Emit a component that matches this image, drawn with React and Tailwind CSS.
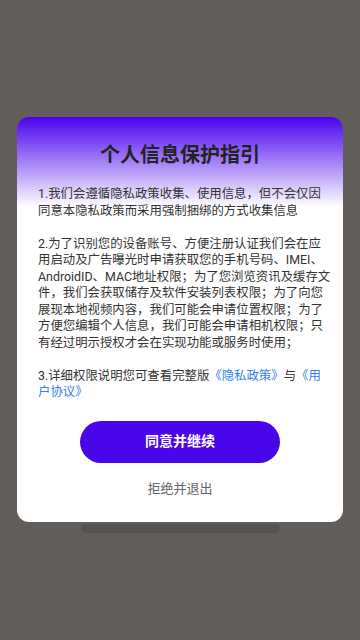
import React from 'react';

const font = { fontFamily: '"Roboto", "Noto Sans CJK SC", sans-serif' };

export default function App() {
    return (
        <div className="min-h-[640px] w-full bg-[#625e5b] pt-[117px]" style={font}>
            {/* Dialog card */}
            <div className="mx-[17px] rounded-[12px] bg-[linear-gradient(to_bottom,#4a02ee_0px,#ffffff_90px)] px-[21px] pt-[24px] pb-[23px]">
                <h1 className="text-center text-[20px] leading-[28px] font-bold text-[#222222]">个人信息保护指引</h1>

                <div className="mt-[17px] text-[12.4px] leading-[16.5px] text-[#333333] whitespace-nowrap">
                    <div>1.我们会遵循隐私政策收集、使用信息，但不会仅因</div>
                    <div>同意本隐私政策而采用强制捆绑的方式收集信息</div>
                    <div className="h-[16.5px]" />
                    <div>2.为了识别您的设备账号、方便注册认证我们会在应</div>
                    <div>用启动及广告曝光时申请获取您的手机号码、IMEI、</div>
                    <div>AndroidID、MAC地址权限；为了您浏览资讯及缓存文</div>
                    <div>件，我们会获取储存及软件安装列表权限；为了向您</div>
                    <div>展现本地视频内容，我们可能会申请位置权限；为了</div>
                    <div>方便您编辑个人信息，我们可能会申请相机权限；只</div>
                    <div>有经过明示授权才会在实现功能或服务时使用；</div>
                    <div className="h-[16.5px]" />
                    <div>
                        3.详细权限说明您可查看完整版<span className="text-[#2f7ff0]">《隐私政策》</span>与<span className="text-[#2f7ff0]">《用</span>
                    </div>
                    <div className="text-[#2f7ff0]">户协议》</div>
                </div>

                <button className="mx-auto mt-[20px] flex h-[42px] w-[200px] items-center justify-center rounded-full bg-[#4a06ea] text-[14px] font-bold text-white">
                    同意并继续
                </button>
                <div className="mt-[16px] text-center text-[13px] leading-[20px] text-[#666666]">拒绝并退出</div>
            </div>

            {/* stacked card edge */}
            <div className="mx-auto mt-[2px] h-[9px] w-[199px] rounded-full bg-[#56524f]" />
        </div>
    );
}
